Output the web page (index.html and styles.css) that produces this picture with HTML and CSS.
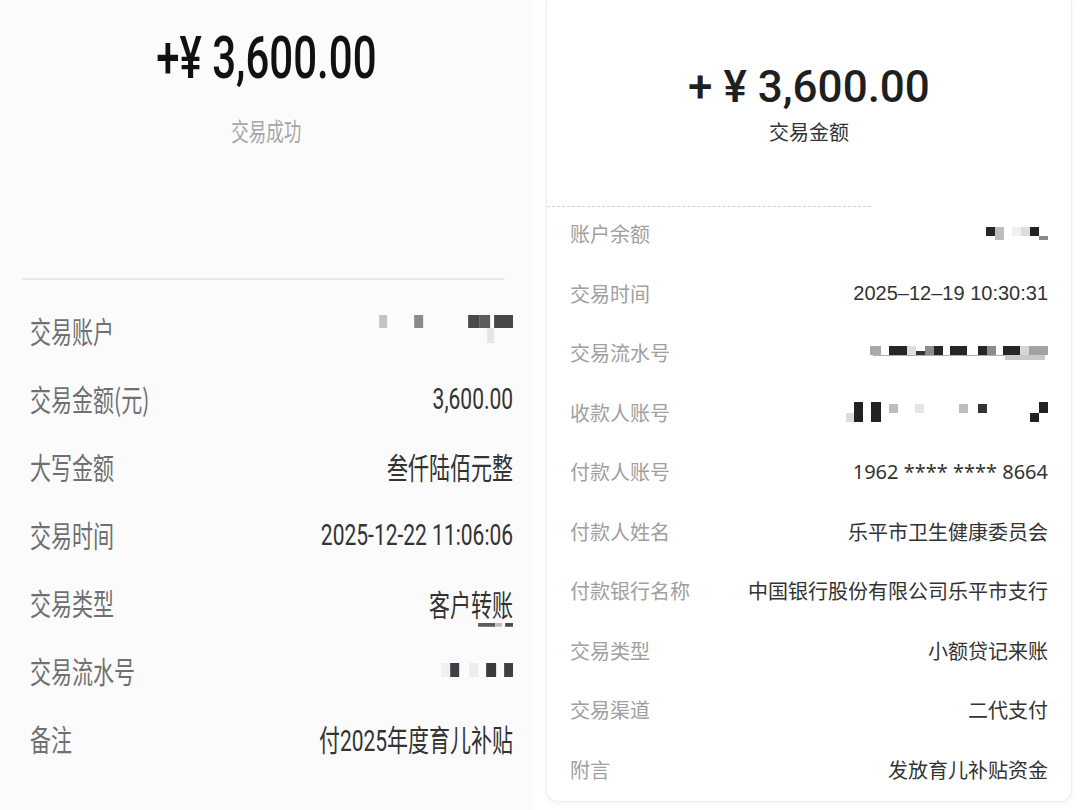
FILE: index.html
```html
<!DOCTYPE html>
<html>
<head>
    <meta charset="utf-8">
    <title>交易详情</title>
    <link rel="stylesheet" href="styles.css">
</head>
<body>
    <div class="page">
        <section class="slip slip-a">
            <div class="slip-a-inner">
                <div class="a-head">
                    <div class="a-amount">+¥ 3,600.00</div>
                    <div class="a-status">交易成功</div>
                </div>
                <ul class="a-rows">
                    <li>
                        <span class="label">交易账户</span>
                        <span class="value">
                            <svg class="mosaic" width="197" height="30" viewBox="376 320 138 30" preserveAspectRatio="none">
                                <rect x="380" y="320" width="8" height="13" fill="#c4c4c4"/>
                                <rect x="415" y="320" width="9" height="13" fill="#8a8a8a"/>
                                <rect x="469" y="320" width="11" height="13" fill="#4a4a4a"/>
                                <rect x="480" y="320" width="11" height="13" fill="#5c5c5c"/>
                                <rect x="495" y="320" width="19" height="13" fill="#474747"/>
                                <rect x="488" y="333" width="7" height="15" fill="#e6e6e6"/>
                            </svg>
                        </span>
                    </li>
                    <li><span class="label">交易金额(元)</span><span class="value">3,600.00</span></li>
                    <li><span class="label">大写金额</span><span class="value">叁仟陆佰元整</span></li>
                    <li><span class="label">交易时间</span><span class="value">2025-12-22 11:06:06</span></li>
                    <li>
                        <span class="label">交易类型</span>
                        <span class="value stacked">客户转账
                            <svg class="underline" width="50" height="5" viewBox="479 626 35 4" preserveAspectRatio="none">
                                <rect x="479" y="626" width="17" height="3" fill="#5a5a5a"/>
                                <rect x="496" y="626" width="7" height="3" fill="#bdbdbd"/>
                                <rect x="506" y="626" width="8" height="3" fill="#4a4a4a"/>
                            </svg>
                        </span>
                    </li>
                    <li>
                        <span class="label">交易流水号</span>
                        <span class="value">
                            <svg class="mosaic" width="107" height="16" viewBox="439 672 75 16" preserveAspectRatio="none">
                                <rect x="442" y="673" width="9" height="14" fill="#f0f0f0"/>
                                <rect x="451" y="673" width="9" height="14" fill="#3f3f46"/>
                                <rect x="470" y="673" width="9" height="14" fill="#ececef"/>
                                <rect x="487" y="673" width="10" height="14" fill="#3a3a40"/>
                                <rect x="505" y="673" width="9" height="14" fill="#3f3f46"/>
                            </svg>
                        </span>
                    </li>
                    <li><span class="label">备注</span><span class="value">付2025年度育儿补贴</span></li>
                </ul>
            </div>
        </section>

        <section class="slip slip-b">
            <div class="b-head">
                <div class="b-amount">+ ¥ 3,600.00</div>
                <div class="b-caption">交易金额</div>
            </div>
            <div class="dash"></div>
            <ul class="b-rows">
                <li>
                    <span class="label">账户余额</span>
                    <span class="value">
                        <svg class="mosaic" width="62" height="14" viewBox="993 241 62 14">
                            <rect x="993" y="241" width="9" height="9" fill="#262626"/>
                            <rect x="1002" y="241" width="9" height="13" fill="#bdbdbd"/>
                            <rect x="1019" y="241" width="9" height="9" fill="#f0f0f0"/>
                            <rect x="1028" y="241" width="9" height="9" fill="#dcdcdc"/>
                            <rect x="1037" y="241" width="9" height="9" fill="#222"/>
                            <rect x="1046" y="250" width="9" height="4" fill="#8a8a8a"/>
                        </svg>
                    </span>
                </li>
                <li><span class="label">交易时间</span><span class="value">2025–12–19 10:30:31</span></li>
                <li>
                    <span class="label">交易流水号</span>
                    <span class="value">
                        <svg class="mosaic" width="178" height="18" viewBox="877 350 178 18">
                            <rect x="877" y="352" width="11" height="9" fill="#a9a9a9"/>
                            <rect x="896" y="352" width="18" height="9" fill="#262626"/>
                            <rect x="914" y="352" width="9" height="9" fill="#dedede"/>
                            <rect x="923" y="357" width="9" height="5" fill="#333"/>
                            <rect x="932" y="352" width="9" height="9" fill="#8c8c8c"/>
                            <rect x="941" y="352" width="9" height="9" fill="#262626"/>
                            <rect x="957" y="352" width="17" height="9" fill="#262626"/>
                            <rect x="985" y="352" width="9" height="10" fill="#262626"/>
                            <rect x="994" y="352" width="9" height="9" fill="#8c8c8c"/>
                            <rect x="1010" y="352" width="17" height="9" fill="#262626"/>
                            <rect x="1027" y="352" width="9" height="9" fill="#d6d6d6"/>
                            <rect x="1036" y="352" width="19" height="9" fill="#a3a3a3"/>
                            <rect x="880" y="361" width="172" height="1" fill="#b0b0b0"/>
                            <rect x="1012" y="361" width="40" height="5" fill="#c9c9c9"/>
                        </svg>
                    </span>
                </li>
                <li>
                    <span class="label">收款人账号</span>
                    <span class="value">
                        <svg class="mosaic" width="202" height="20" viewBox="853 414 202 20">
                            <rect x="853" y="425" width="8" height="9" fill="#dcdcdc"/>
                            <rect x="861" y="414" width="9" height="20" fill="#222"/>
                            <rect x="878" y="414" width="10" height="20" fill="#222"/>
                            <rect x="896" y="416" width="9" height="9" fill="#bdbdbd"/>
                            <rect x="922" y="416" width="9" height="9" fill="#e5e5e5"/>
                            <rect x="966" y="416" width="9" height="9" fill="#bdbdbd"/>
                            <rect x="985" y="416" width="9" height="9" fill="#333"/>
                            <rect x="1046" y="414" width="9" height="11" fill="#222"/>
                            <rect x="1037" y="425" width="9" height="9" fill="#222"/>
                        </svg>
                    </span>
                </li>
                <li><span class="label">付款人账号</span><span class="value acct">1962 **** **** 8664</span></li>
                <li><span class="label">付款人姓名</span><span class="value">乐平市卫生健康委员会</span></li>
                <li><span class="label">付款银行名称</span><span class="value">中国银行股份有限公司乐平市支行</span></li>
                <li><span class="label">交易类型</span><span class="value">小额贷记来账</span></li>
                <li><span class="label">交易渠道</span><span class="value">二代支付</span></li>
                <li><span class="label">附言</span><span class="value">发放育儿补贴资金</span></li>
            </ul>
        </section>
    </div>
</body>
</html>
```

FILE: styles.css
```css
body {
    margin: 0;
    background-color: #ffffff;
    font-family: "Noto Sans CJK SC", sans-serif;
}
ul {
    list-style: none;
    margin: 0;
    padding: 0;
}
.page {
    display: grid;
    grid-template-columns: 533px 526px;
    column-gap: 13px;
    width: 1080px;
    height: 810px;
    overflow: hidden;
}

/* left slip: a phone screenshot squeezed sideways */
.slip-a {
    background-color: #fbfbfb;
    overflow: hidden;
    height: 810px;
}
.slip-a-inner {
    width: 761px;
    transform: scaleX(0.7);
    transform-origin: left top;
}
.a-head {
    height: 278px;
    margin: 0 40px 0 31px;
    border-bottom: 2px solid #e8e8e8;
    text-align: center;
}
.a-amount {
    padding-top: 26px;
    padding-left: 9px;
    font-family: Roboto, "Liberation Sans", sans-serif;
    font-weight: 500;
    font-size: 60px;
    line-height: 64px;
    color: #111111;
}
.a-status {
    margin-top: 24px;
    padding-left: 9px;
    font-size: 25px;
    line-height: 32px;
    color: #a6a6a6;
}
.a-rows {
    margin-top: 16px;
    padding: 0 28px 0 43px;
}
.a-rows li {
    display: flex;
    justify-content: space-between;
    align-items: center;
    height: 68px;
    font-size: 30px;
}
.a-rows .label {
    color: #707070;
}
.a-rows .value {
    font-family: Roboto, "Noto Sans CJK SC", sans-serif;
    color: #333333;
}
.a-rows .value.stacked {
    display: flex;
    flex-direction: column;
    align-items: flex-end;
    font-family: "Noto Sans CJK SC", sans-serif;
    line-height: 40px;
    margin-top: 6px;
}
.mosaic,
.underline {
    display: block;
}

/* right slip: card with dashed tear line */
.slip-b {
    background-color: #ffffff;
    border: 1px solid #eeeeee;
    border-top: none;
    border-radius: 0 0 12px 12px;
    box-shadow: 0 2px 6px rgba(0, 0, 0, 0.04);
    height: 801px;
}
.b-head {
    height: 206px;
    text-align: center;
}
.b-amount {
    padding-top: 58px;
    font-family: Roboto, "Liberation Sans", sans-serif;
    font-weight: 500;
    font-size: 44px;
    line-height: 58px;
    color: #1f1f1f;
}
.b-caption {
    margin-top: 2px;
    font-size: 20px;
    line-height: 28px;
    color: #333333;
}
.dash {
    width: 324px;
    border-top: 1px dashed #d0d0d0;
}
.b-rows {
    margin-top: -3px;
    padding: 0 23px;
}
.b-rows li {
    display: flex;
    justify-content: space-between;
    align-items: center;
    height: 59.5px;
    font-size: 20px;
}
.b-rows .label {
    color: #a0a0a0;
}
.b-rows .value {
    font-family: "Liberation Sans", "Noto Sans CJK SC", sans-serif;
    color: #333333;
}
.b-rows .value.acct {
    font-family: "Noto Sans", sans-serif;
}
```
